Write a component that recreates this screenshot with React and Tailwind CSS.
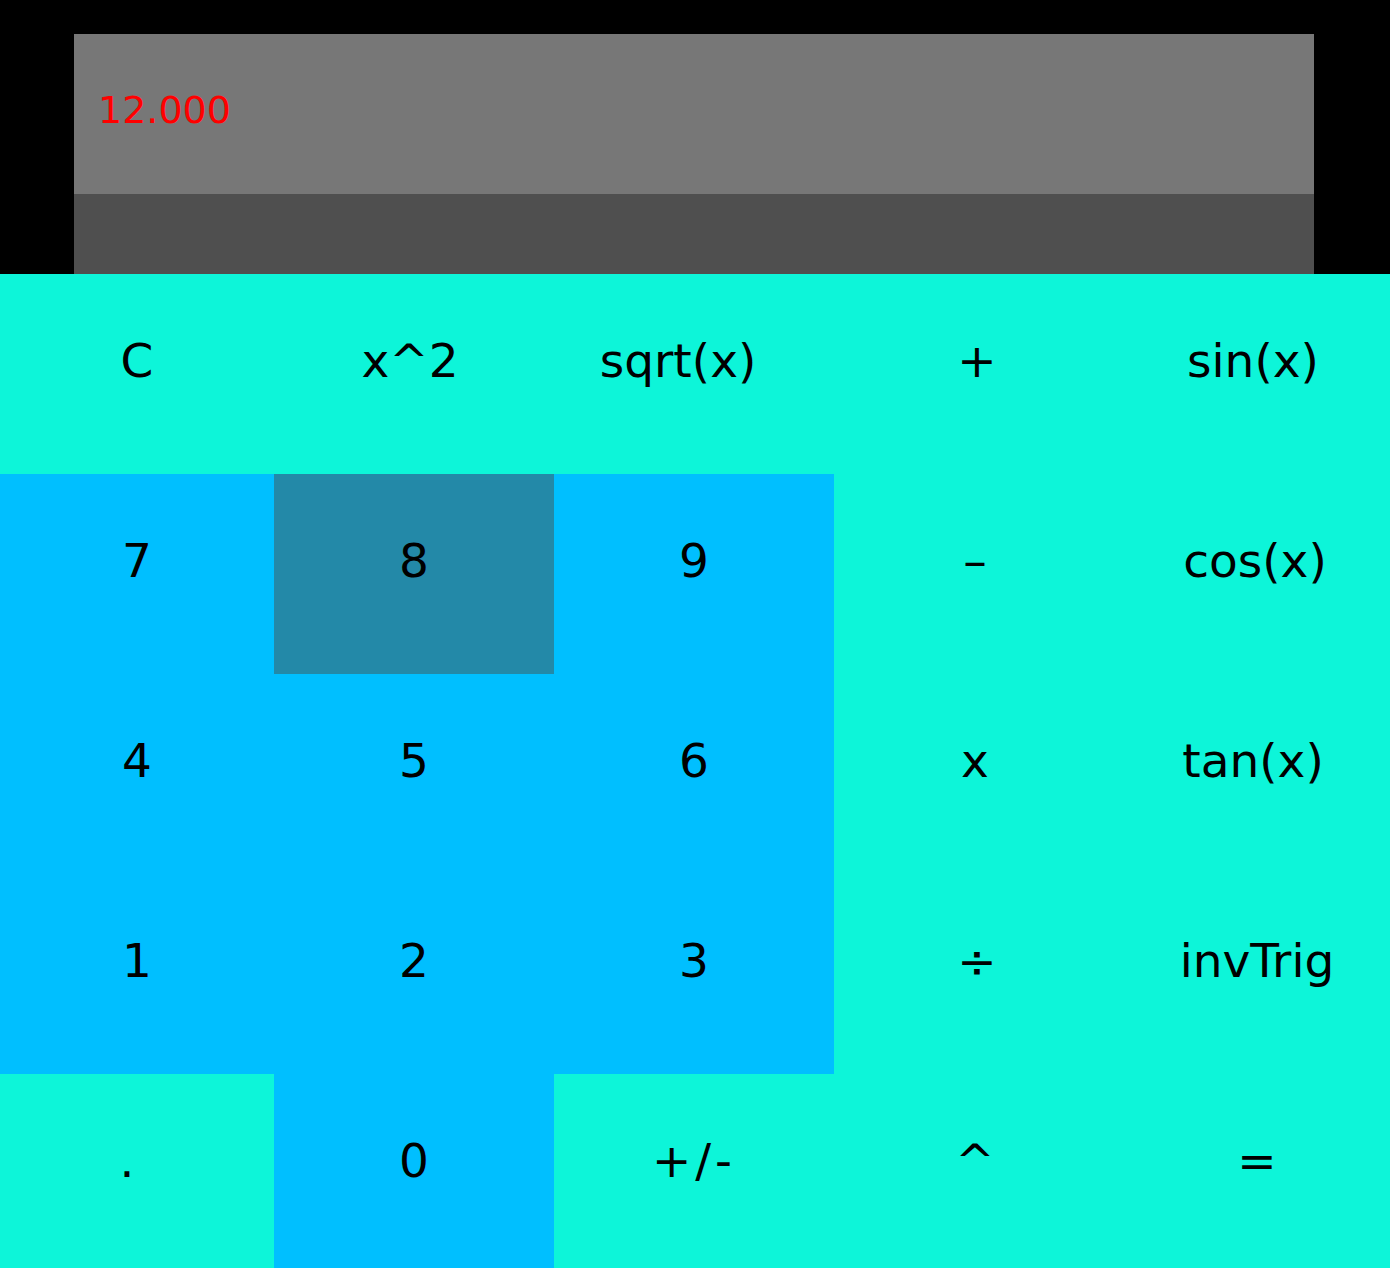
import React from "react";

const CY = "bg-[#0df5d9]";
const BL = "bg-[#00bfff]";
const DK = "bg-[#2389a8]";

const rows = [
  [["C", CY, ""], ["x^2", CY, "-translate-x-[4px]"], ["sqrt(x)", CY, "-translate-x-[16px]"], ["+", CY, "translate-x-[2px]"], ["sin(x)", CY, ""]],
  [["7", BL, ""], ["8", DK, ""], ["9", BL, ""], ["\u2013", CY, ""], ["cos(x)", CY, "translate-x-[2px]"]],
  [["4", BL, ""], ["5", BL, ""], ["6", BL, ""], ["x", CY, ""], ["tan(x)", CY, ""]],
  [["1", BL, ""], ["2", BL, ""], ["3", BL, ""], ["\u00f7", CY, "translate-x-[2px]"], ["invTrig", CY, "translate-x-[4px]"]],
  [[".", CY, "-translate-x-[10px]"], ["0", BL, ""], ["+/-", CY, "tracking-[4px]"], ["^", CY, ""], ["=", CY, "translate-x-[4px]"]],
];

export default function App() {
  return (
    <div className="w-[1390px] min-h-[1268px] bg-black font-['DejaVu_Sans',sans-serif]">
      <div className="pl-[74px] pr-[76px] pt-[34px]">
        <div className="h-[160px] bg-[#777777] flex items-center pl-[24px] pb-[8px]">
          <span className="text-[#ff0000] text-[38px] leading-none">12.000</span>
        </div>
        <div className="h-[80px] bg-[#4f4f4f]"></div>
      </div>
      <div className="grid grid-cols-[274px_280px_280px_282px_274px] auto-rows-[200px]">
        {rows.flat().map(([label, bg, extra], i) => (
          <div
            key={i}
            className={`${bg} flex items-center justify-center pb-[28px] text-black text-[47px] leading-none`}
          >
            <span className={extra}>{label}</span>
          </div>
        ))}
      </div>
    </div>
  );
}
